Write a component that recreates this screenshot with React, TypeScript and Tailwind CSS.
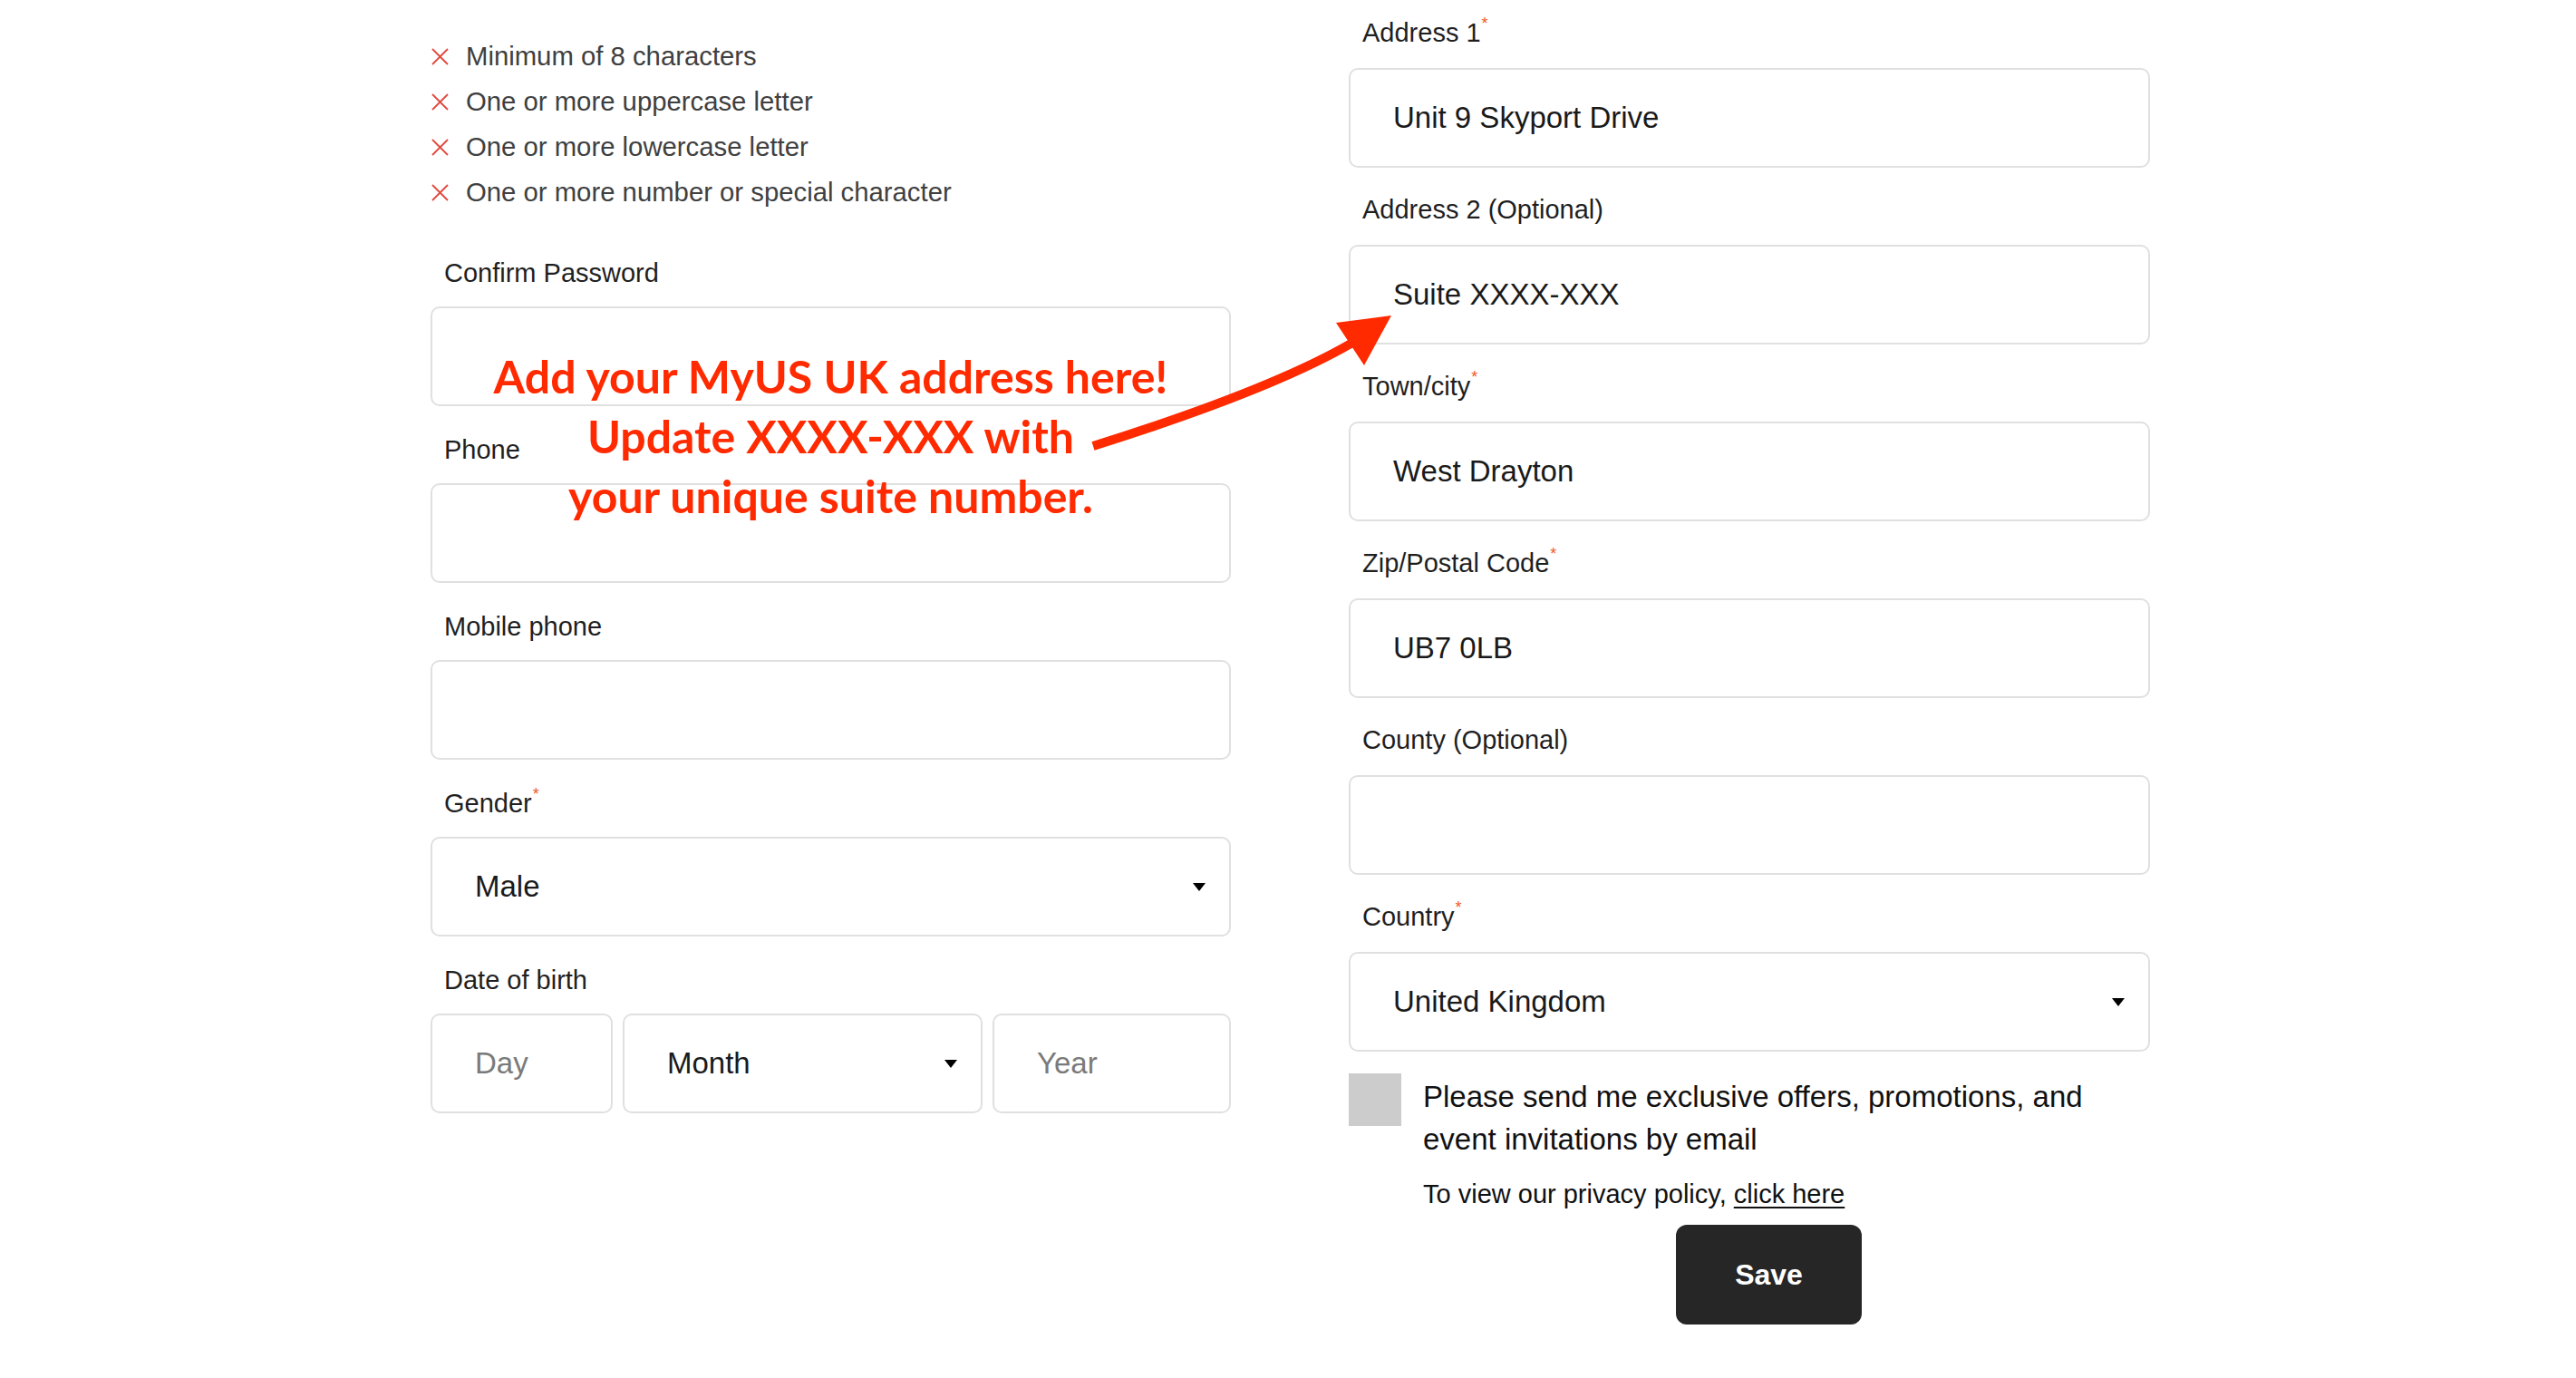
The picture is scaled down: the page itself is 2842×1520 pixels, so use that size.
import React from "react";

const rules = [
  "Minimum of 8 characters",
  "One or more uppercase letter",
  "One or more lowercase letter",
  "One or more number or special character",
];

function XMark() {
  return (
    <svg width="21" height="21" viewBox="0 0 21 21" className="shrink-0">
      <path d="M2 2 L19 19 M19 2 L2 19" stroke="#e2483d" strokeWidth="1.8" fill="none" />
    </svg>
  );
}

function Caret() {
  return <span className="w-0 h-0 border-l-[7px] border-r-[7px] border-t-[9px] border-l-transparent border-r-transparent border-t-black" />;
}

function Label({ children, required }: { children: React.ReactNode; required?: boolean }) {
  return (
    <div className="h-[40px] flex items-center pl-[15px] mb-[16px] text-[29px] text-[#1f1f1f]">
      <span>{children}</span>
      {required && <span className="relative -top-[11px] ml-[1px] text-[18px] text-[#f05a28]">*</span>}
    </div>
  );
}

function Box({ value, placeholder, caret, className = "" }: { value?: string; placeholder?: string; caret?: boolean; className?: string }) {
  return (
    <div
      className={`h-[110px] rounded-[10px] border-2 border-[#e0e0e0] bg-white flex items-center justify-between pl-[47px] pr-[26px] text-[33px] ${className}`}
    >
      <span className={value ? "text-[#1a1a1a]" : "text-[#7a7a7a]"}>{value ?? placeholder}</span>
      {caret && <Caret />}
    </div>
  );
}

function Field({ label, required, value, caret, gap = "mb-[29px]" }: { label: string; required?: boolean; value?: string; caret?: boolean; gap?: string }) {
  return (
    <div className={gap}>
      <Label required={required}>{label}</Label>
      <Box value={value} caret={caret} />
    </div>
  );
}

export default function App() {
  return (
    <div className="relative w-full h-[1520px] bg-white overflow-hidden font-['Liberation_Sans',Arial,sans-serif]">
      <div className="ml-[475px] w-[1897px] flex gap-[130px]">
        {/* left column */}
        <div className="relative w-[883px] shrink-0">
          <ul className="pt-[37px]">
            {rules.map((r) => (
              <li key={r} className="h-[50px] flex items-center gap-[18px] text-[29.3px] text-[#404040]">
                <XMark />
                {r}
              </li>
            ))}
          </ul>

          <div className="mt-[45px]">
            <Field label="Confirm Password" />
            <Field label="Phone" />
            <Field label="Mobile phone" />
            <Field label="Gender" required value="Male" caret />
            <Label>Date of birth</Label>
            <div className="flex gap-[11px]">
              <Box placeholder="Day" className="w-[201px]" />
              <Box value="Month" caret className="w-[397px]" />
              <Box placeholder="Year" className="flex-1" />
            </div>
          </div>

          {/* annotation */}
          <div className="absolute -left-[20px] -right-[20px] top-[382px] text-center font-['Lato',sans-serif] font-bold text-[50px] leading-[66px] text-[#ff2a00]">
            <p>Add your MyUS UK address here!</p>
            <p>Update XXXX-XXX with</p>
            <p>your unique suite number.</p>
          </div>
        </div>

        {/* right column */}
        <div className="w-[884px] shrink-0 pt-[17px]">
          <div className="[&>div>div:first-child]:mb-[18px]">
            <Field label="Address 1" required value="Unit 9 Skyport Drive" gap="mb-[27px]" />
            <Field label="Address 2 (Optional)" value="Suite XXXX-XXX" gap="mb-[27px]" />
            <Field label="Town/city" required value="West Drayton" gap="mb-[27px]" />
            <Field label="Zip/Postal Code" required value="UB7 0LB" gap="mb-[27px]" />
            <Field label="County (Optional)" gap="mb-[27px]" />
            <Field label="Country" required value="United Kingdom" caret gap="mb-0" />
          </div>

          <div className="mt-[24px] flex gap-[24px]">
            <div className="w-[58px] h-[58px] bg-[#cccccc] shrink-0" />
            <div className="pt-[2px] w-[780px]">
              <p className="text-[33px] leading-[47px] text-[#111]">
                Please send me exclusive offers, promotions, and event invitations by email
              </p>
              <p className="mt-[17px] text-[29px] leading-[40px] text-[#111]">
                To view our privacy policy,{" "}
                <a className="underline decoration-2 underline-offset-4 text-[#111]">click here</a>
              </p>
              <button className="mt-[14px] ml-[279px] w-[205px] h-[110px] rounded-[12px] bg-[#262626] text-white text-[32px] font-bold">
                Save
              </button>
            </div>
          </div>
        </div>
      </div>

      {/* arrow */}
      <svg className="absolute inset-0 pointer-events-none" width="2842" height="1520" viewBox="0 0 2842 1520">
        <path d="M1206 492 Q1403 430 1492 378" stroke="#ff2a00" strokeWidth="10" fill="none" />
        <polygon points="1535,348 1474,356 1505,403" fill="#ff2a00" />
      </svg>
    </div>
  );
}
